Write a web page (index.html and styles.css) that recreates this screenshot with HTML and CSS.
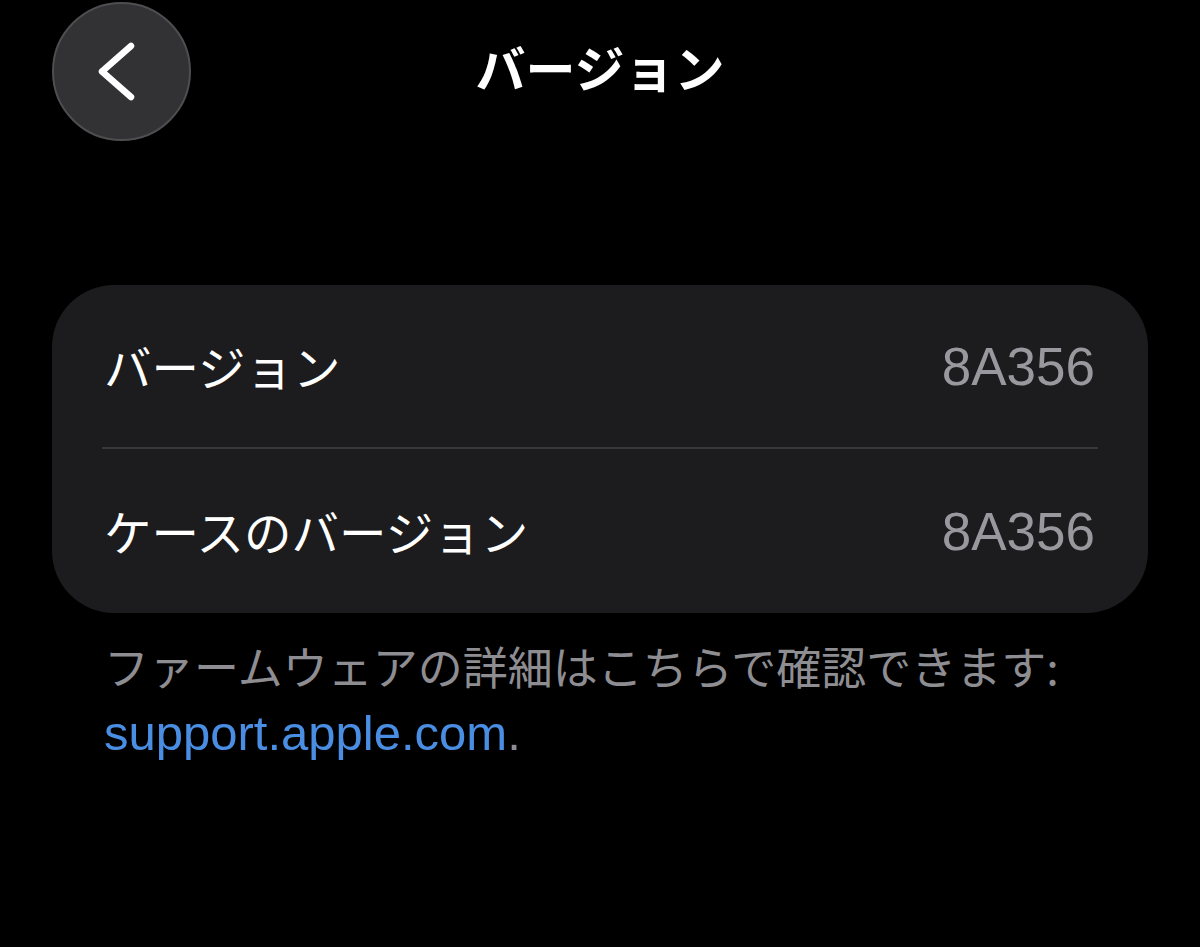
FILE: index.html
```html
<!DOCTYPE html>
<html lang="ja">
<head>
<meta charset="utf-8">
<title>バージョン</title>
<link rel="stylesheet" href="styles.css">
</head>
<body>
<header class="topbar">
  <button class="back" aria-label="戻る">
    <svg viewBox="0 0 139 139" width="139" height="139">
      <path d="M79 44 L50 69.5 L79 95" fill="none" stroke="#fff" stroke-width="6.5" stroke-linecap="round" stroke-linejoin="round"/>
    </svg>
  </button>
  <h1 class="title">バージョン</h1>
  <div class="spacer"></div>
</header>
<main>
  <section class="card">
    <div class="row">
      <span class="label">バージョン</span>
      <span class="value">8A356</span>
    </div>
    <div class="divider"></div>
    <div class="row row-last">
      <span class="label">ケースのバージョン</span>
      <span class="value">8A356</span>
    </div>
  </section>
  <p class="note">ファームウェアの詳細はこちらで確認できます:<br><a class="link" href="#">support.apple.com</a><span class="dot">.</span></p>
</main>
</body>
</html>
```
FILE: styles.css
```css
html, body {
  margin: 0;
  padding: 0;
  background: #000;
  height: 100%;
}
body {
  font-family: "Noto Sans CJK JP", "Liberation Sans", sans-serif;
  color: #fff;
  overflow: hidden;
}
.topbar {
  display: grid;
  grid-template-columns: 139px 1fr 139px;
  align-items: center;
  padding: 1px 52px 0;
  height: 140px;
}
.back {
  width: 139px;
  height: 139px;
  border-radius: 50%;
  background: #323234;
  border: 2px solid #4e4e50;
  box-sizing: border-box;
  padding: 0;
  display: flex;
  align-items: center;
  justify-content: center;
  cursor: pointer;
}
.back svg {
  display: block;
  flex: none;
}
.title {
  margin: 0;
  text-align: center;
  font-size: 50px;
  font-weight: 700;
  line-height: 1;
  color: #fff;
  position: relative;
  top: -5px;
}
.card {
  margin: 144px 52px 0;
  background: #1c1c1e;
  border-radius: 62px;
  padding: 0 50px;
}
.row {
  height: 162px;
  display: flex;
  align-items: center;
  justify-content: space-between;
  padding: 0 3px 0 2px;
}
.row-last {
  height: 164px;
}
.label {
  font-size: 47.5px;
  color: #fff;
  line-height: 1;
}
.value {
  font-family: "Liberation Sans", sans-serif;
  font-size: 53px;
  color: #98989e;
  line-height: 1;
}
.divider {
  height: 2px;
  background: #38383a;
}
.note {
  margin: 20px 0 0;
  padding: 0 104px;
  font-size: 45px;
  line-height: 65px;
  color: #8d8d92;
}
.link {
  font-family: "Liberation Sans", sans-serif;
  font-size: 49px;
  color: #4a8ee4;
  text-decoration: none;
}
.dot {
  font-family: "Liberation Sans", sans-serif;
  font-size: 49px;
  color: #8d8d92;
}
```
